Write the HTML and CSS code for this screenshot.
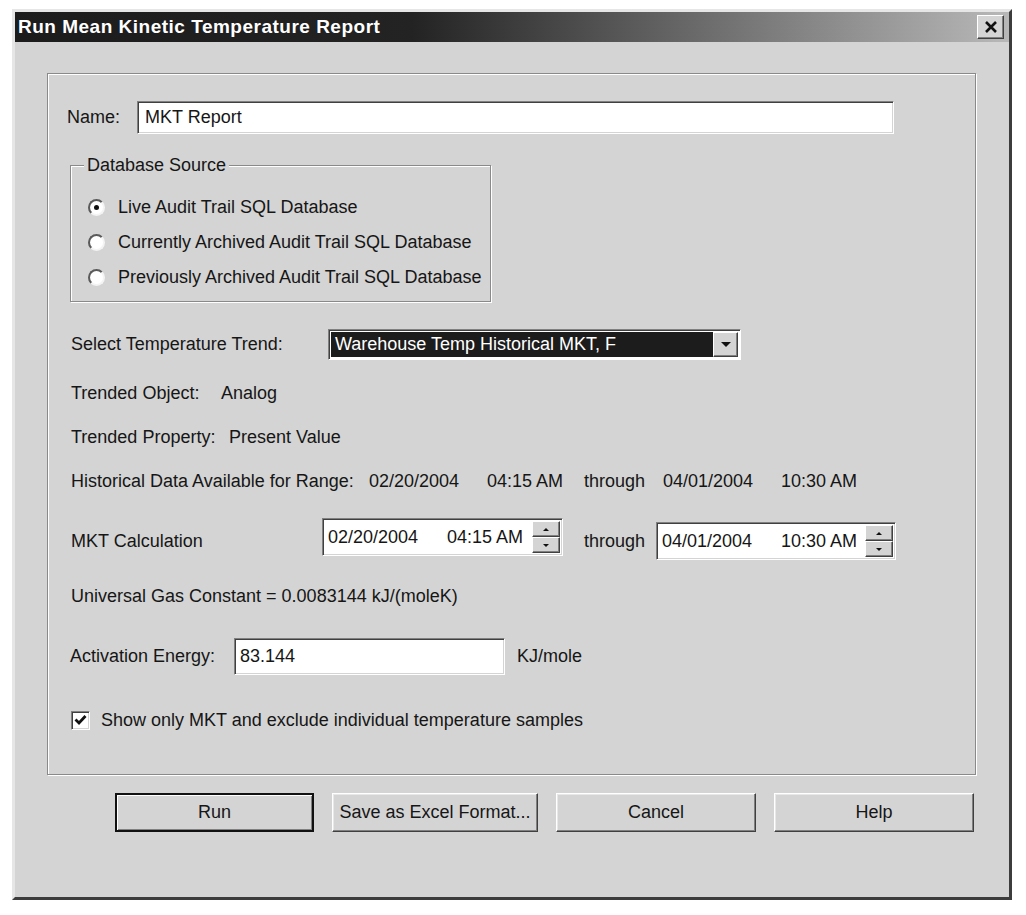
FILE: index.html
```html
<!DOCTYPE html>
<html lang="en">
<head>
    <meta charset="UTF-8">
    <title>Run Mean Kinetic Temperature Report</title>
    <link rel="stylesheet" href="styles.css">
</head>
<body>
    <div class="window">
        <div class="titlebar">
            <span class="title">Run Mean Kinetic Temperature Report</span>
            <span class="close-btn">
                <svg width="14" height="12" viewBox="0 0 14 12"><path d="M2 1 L12 11 M12 1 L2 11" stroke="#111" stroke-width="2.6" fill="none"/></svg>
            </span>
        </div>
        <div class="content">
            <div class="panel">
                <div class="name-row">
                    <span class="name-label">Name:</span>
                    <div class="field name-field">MKT Report</div>
                </div>

                <!-- Database source group -->
                <div class="group">
                    <div class="legend"><span>Database Source</span></div>
                    <div class="radio-list">
                        <div class="radio-row"><span class="radio checked"></span>Live Audit Trail SQL Database</div>
                        <div class="radio-row"><span class="radio"></span>Currently Archived Audit Trail SQL Database</div>
                        <div class="radio-row"><span class="radio"></span>Previously Archived Audit Trail SQL Database</div>
                    </div>
                </div>

                <div class="trend-row">
                    <span class="trend-label">Select Temperature Trend:</span>
                    <div class="combo">
                        <span class="combo-text">Warehouse Temp Historical MKT, F</span>
                        <span class="combo-btn"><span class="arrow-down"></span></span>
                    </div>
                </div>

                <div class="info-row first">
                    <span class="obj-label">Trended Object:</span><span>Analog</span>
                </div>
                <div class="info-row">
                    <span class="prop-label">Trended Property:</span><span>Present Value</span>
                </div>
                <div class="info-row">
                    <span class="range-label">Historical Data Available for Range:</span>
                    <span class="date">02/20/2004</span>
                    <span class="time">04:15 AM</span>
                    <span class="through">through</span>
                    <span class="date">04/01/2004</span>
                    <span>10:30 AM</span>
                </div>

                <div class="mkt-row">
                    <span class="mkt-label">MKT Calculation</span>
                    <div class="spin-field">
                        <span class="spin-text"><span class="spin-date">02/20/2004</span>04:15 AM</span>
                        <span class="spinner">
                            <span class="spin-btn"><span class="arrow-up"></span></span>
                            <span class="spin-btn"><span class="arrow-small-down"></span></span>
                        </span>
                    </div>
                    <span class="mkt-through">through</span>
                    <div class="spin-field second">
                        <span class="spin-text"><span class="spin-date">04/01/2004</span>10:30 AM</span>
                        <span class="spinner">
                            <span class="spin-btn"><span class="arrow-up"></span></span>
                            <span class="spin-btn"><span class="arrow-small-down"></span></span>
                        </span>
                    </div>
                </div>

                <div class="gas-row">Universal Gas Constant = 0.0083144 kJ/(moleK)</div>

                <div class="energy-row">
                    <span class="energy-label">Activation Energy:</span>
                    <div class="field energy-field">83.144</div>
                    <span class="unit">KJ/mole</span>
                </div>

                <div class="check-row">
                    <span class="checkbox">
                        <svg width="13" height="12" viewBox="0 0 13 12"><path d="M1.5 5.5 L5 9 L11.5 2" stroke="#111" stroke-width="2.8" fill="none"/></svg>
                    </span>
                    Show only MKT and exclude individual temperature samples
                </div>
            </div>

            <div class="buttons">
                <div class="btn default btn-run">Run</div>
                <div class="btn btn-save">Save as Excel Format...</div>
                <div class="btn btn-cancel">Cancel</div>
                <div class="btn btn-help">Help</div>
            </div>
        </div>
    </div>
</body>
</html>
```

FILE: styles.css
```css
body {
    margin: 0;
    background-color: #fff;
    font-family: "Liberation Sans", Arial, sans-serif;
    font-size: 18px;
    color: #161616;
}
.window {
    margin: 9px 0 0 12px;
    width: 1000px;
    height: 891px;
    box-sizing: border-box;
    background-color: #d4d4d4;
    border: 3px solid;
    border-color: #e6e6e6 #3c3c3c #3c3c3c #e6e6e6;
}
.titlebar {
    height: 30px;
    display: flex;
    align-items: center;
    justify-content: space-between;
    padding: 0 5px 0 3px;
    background: linear-gradient(to right, #1c1c1c 0%, #232323 40%, #b8b8b8 100%);
}
.title {
    color: #fff;
    font-weight: bold;
    font-size: 19px;
    letter-spacing: 0.5px;
}
.close-btn {
    width: 27px;
    height: 24px;
    box-sizing: border-box;
    display: flex;
    align-items: center;
    justify-content: center;
    background-color: #d4d4d4;
    border: 1px solid;
    border-color: #fff #404040 #404040 #fff;
    box-shadow: inset -1px -1px #808080;
}
.content {
    padding: 31px 0 0 32px;
}
/* etched frame */
.panel {
    width: 929px;
    height: 702px;
    box-sizing: border-box;
    border: 1px solid #8a8a8a;
    box-shadow: inset 1px 1px #fff, 1px 1px #fff;
    padding: 27px 0 0 23px;
}
.name-row {
    display: flex;
    align-items: center;
    height: 33px;
}
.name-label {
    width: 70px;
    margin-left: -4px;
}
/* sunken edit box */
.field {
    box-sizing: border-box;
    background-color: #fff;
    border: 1px solid;
    border-color: #808080 #fff #fff #808080;
    box-shadow: inset 1px 1px #404040, inset -1px -1px #d4d4d4;
    display: flex;
    align-items: center;
}
.name-field {
    width: 757px;
    height: 33px;
    padding-left: 7px;
}
.group {
    margin: 31px 0 0 -1px;
    width: 421px;
    height: 137px;
    box-sizing: border-box;
    border: 1px solid #8a8a8a;
    box-shadow: inset 1px 1px #fff, 1px 1px #fff;
}
.legend {
    height: 22px;
    line-height: 22px;
    margin-top: -12px;
    padding-left: 13px;
}
.legend span {
    background-color: #d4d4d4;
    padding: 0 3px;
}
.radio-list {
    margin-top: 14px;
}
.radio-row {
    display: flex;
    align-items: center;
    height: 35px;
    padding-left: 17px;
}
.radio {
    width: 17px;
    height: 17px;
    box-sizing: border-box;
    margin-right: 13px;
    border-radius: 50%;
    background-color: #fff;
    border: 2px solid;
    border-color: #5a5a5a #f4f4f4 #f4f4f4 #5a5a5a;
    display: flex;
    align-items: center;
    justify-content: center;
}
.radio.checked::after {
    content: "";
    width: 5px;
    height: 5px;
    border-radius: 50%;
    background-color: #111;
}
.trend-row {
    display: flex;
    align-items: center;
    margin-top: 27px;
    height: 31px;
}
.trend-label {
    width: 257px;
}
.combo {
    width: 413px;
    height: 31px;
    box-sizing: border-box;
    display: flex;
    background-color: #fff;
    border: 1px solid;
    border-color: #808080 #fff #fff #808080;
    box-shadow: inset 1px 1px #404040;
    padding: 2px;
}
.combo-text {
    flex: 1;
    background-color: #1c1c1c;
    color: #fff;
    padding-left: 4px;
    display: flex;
    align-items: center;
}
.combo-btn {
    width: 25px;
    box-sizing: border-box;
    background-color: #d4d4d4;
    border: 1px solid;
    border-color: #fff #404040 #404040 #fff;
    box-shadow: inset -1px -1px #808080;
    display: flex;
    align-items: center;
    justify-content: center;
}
.arrow-down {
    width: 0;
    height: 0;
    border-left: 5px solid transparent;
    border-right: 5px solid transparent;
    border-top: 5px solid #111;
}
.info-row {
    display: flex;
    align-items: center;
    height: 44px;
}
.info-row.first {
    margin-top: 11px;
}
.obj-label {
    width: 150px;
}
.prop-label {
    width: 158px;
}
.range-label {
    width: 298px;
}
.date {
    width: 118px;
}
.time {
    width: 97px;
}
.through {
    width: 79px;
}
.mkt-row {
    display: flex;
    align-items: flex-start;
    margin-top: 15px;
    height: 42px;
}
.mkt-label {
    width: 251px;
    height: 46px;
    line-height: 46px;
}
.spin-field {
    width: 241px;
    height: 38px;
    box-sizing: border-box;
    display: flex;
    background-color: #fff;
    border: 1px solid;
    border-color: #808080 #fff #fff #808080;
    box-shadow: inset 1px 1px #404040, inset -1px -1px #d4d4d4;
    padding: 2px;
}
.spin-field.second {
    width: 240px;
    margin-top: 4px;
}
.spin-text {
    flex: 1;
    display: flex;
    align-items: center;
    padding-left: 3px;
}
.spin-date {
    width: 119px;
}
.spinner {
    width: 28px;
    display: flex;
    flex-direction: column;
}
.spin-btn {
    flex: 1;
    box-sizing: border-box;
    background-color: #d4d4d4;
    border: 1px solid;
    border-color: #fff #404040 #404040 #fff;
    box-shadow: inset -1px -1px #808080;
    display: flex;
    align-items: center;
    justify-content: center;
}
.arrow-up {
    width: 0;
    height: 0;
    border-left: 3px solid transparent;
    border-right: 3px solid transparent;
    border-bottom: 3px solid #111;
}
.arrow-small-down {
    width: 0;
    height: 0;
    border-left: 3px solid transparent;
    border-right: 3px solid transparent;
    border-top: 3px solid #111;
}
.mkt-through {
    width: 72px;
    margin-left: 21px;
    height: 46px;
    line-height: 46px;
}
.gas-row {
    margin-top: 21px;
    height: 30px;
    line-height: 30px;
}
.energy-row {
    display: flex;
    align-items: center;
    margin-top: 27px;
    height: 37px;
}
.energy-label {
    width: 164px;
    margin-left: -1px;
}
.energy-field {
    width: 271px;
    height: 37px;
    padding-left: 5px;
}
.unit {
    margin-left: 12px;
}
.check-row {
    display: flex;
    align-items: center;
    margin-top: 30px;
    height: 30px;
}
.checkbox {
    width: 19px;
    height: 19px;
    box-sizing: border-box;
    margin-right: 11px;
    background-color: #fff;
    border: 1px solid;
    border-color: #808080 #fff #fff #808080;
    box-shadow: inset 1px 1px #404040, inset -1px -1px #d4d4d4;
    display: flex;
    align-items: center;
    justify-content: center;
}
.buttons {
    display: flex;
    gap: 18px;
    margin: 18px 0 0 68px;
}
/* raised push button */
.btn {
    height: 39px;
    box-sizing: border-box;
    display: flex;
    align-items: center;
    justify-content: center;
    background-color: #d4d4d4;
    border: 1px solid;
    border-color: #fff #404040 #404040 #fff;
    box-shadow: inset -1px -1px #808080, inset 1px 1px #e8e8e8;
}
.btn.default {
    border: 2px solid #111;
    box-shadow: inset 1px 1px #fff, inset -1px -1px #808080;
}
.btn-run {
    width: 199px;
}
.btn-save {
    width: 206px;
}
.btn-cancel {
    width: 200px;
}
.btn-help {
    width: 200px;
}
```
